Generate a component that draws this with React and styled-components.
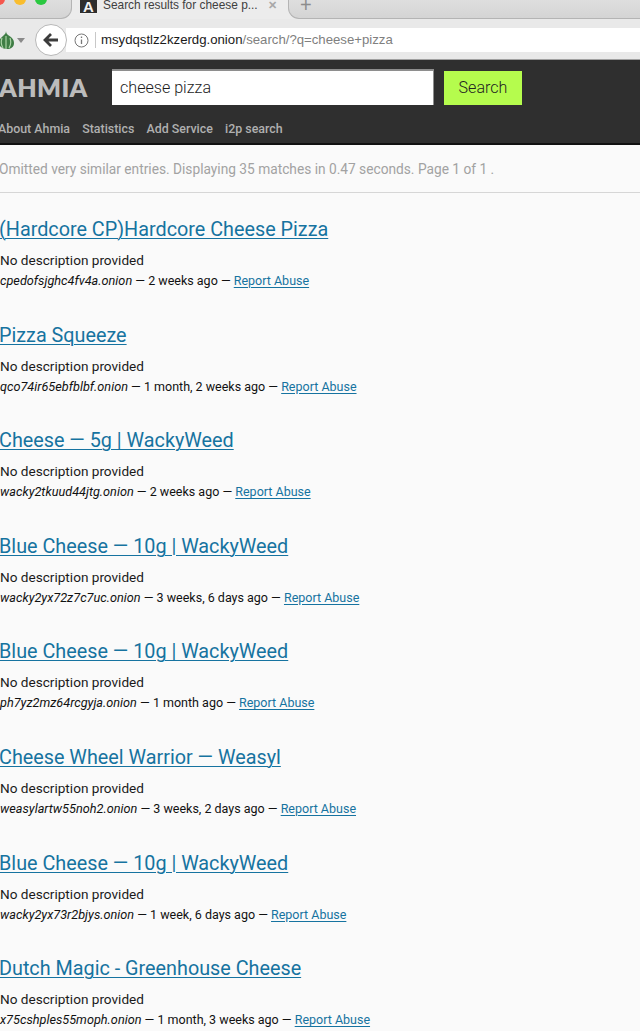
import React from "react";
import styled, { createGlobalStyle } from "styled-components";

const Global = createGlobalStyle`
  html, body { margin: 0; padding: 0; background: #fafafa; }
  body { width: 640px; height: 1031px; overflow: hidden; font-family: Roboto, "Liberation Sans", sans-serif; }
  * { box-sizing: border-box; }
`;
const Page = styled.div`width: 640px; height: 1031px; overflow: hidden; background: #fafafa;`;
const TabStrip = styled.div`height: 19px; display: flex; align-items: stretch; background: #ececec;`;
const Lights = styled.div`
  width: 72px; flex: none; display: flex; gap: 9px; overflow: hidden;
  background: linear-gradient(#dedede, #d4d4d4); border: solid #b4b4b4; border-width: 0 1px 1px 0;
  border-bottom-right-radius: 11px;
`;
const Light = styled.span`
  width: 12px; height: 12px; border-radius: 50%; background: ${p => p.$c}; flex: none; margin-top: -7px;
  &:first-child { margin-left: -7px; }
`;
const Tab = styled.div`
  width: 216px; flex: none; display: flex; align-items: flex-start; gap: 6px; padding-left: 8px;
  font: 11.9px/11px "Liberation Sans", Arial, sans-serif; color: #404040;
`;
const Favicon = styled.div`
  width: 17px; height: 14px; background: #2e2e2e; color: #f2f2f2; border-bottom: 1px solid #f2f2f2;
  font: bold 15px/14px "Liberation Sans", sans-serif; text-align: center; flex: none; overflow: hidden;
`;
const TabTitle = styled.span`flex: 1; white-space: nowrap;`;
const TabClose = styled.span`color: #a8a8a8; font: bold 11px/10px "Liberation Sans", sans-serif; margin-right: 11px;`;
const RestStrip = styled.div`
  flex: 1; background: linear-gradient(#dedede, #d4d4d4); border: solid #b4b4b4; border-width: 0 0 1px 1px;
  border-bottom-left-radius: 11px; padding-left: 11px; color: #8c8c8c; font: 300 20px/10px "Liberation Sans", sans-serif;
`;
const AddressBar = styled.div`
  height: 41px; padding-top: 2px; background: #e9e9e9; display: flex; align-items: center; border-bottom: 1px solid #a0a0a0;
`;
const AddonIcon = styled.div`width: 35px; display: flex; align-items: center; flex: none; gap: 3px; padding-right: 2px;`;
const BackButton = styled.div`
  width: 32px; height: 32px; border-radius: 50%; background: #fff; border: 1px solid #b8b8b8;
  display: flex; align-items: center; justify-content: center; flex: none; z-index: 1;
`;
const UrlField = styled.div`
  height: 24px; flex: 1; margin-left: -1px; background: #fff; display: flex; align-items: center;
  font: 13.2px/24px "Liberation Sans", Arial, sans-serif; color: #1a1a1a; white-space: nowrap; padding-left: 8px;
`;
const Divider = styled.span`width: 1px; height: 16px; background: #c8c8c8; margin: 0 5px 0 6px;`;
const UrlRest = styled.span`color: #808080;`;
const Header = styled.header`background: #2f2f2f; height: 85px; border-bottom: 2px solid #111;`;
const SearchRow = styled.div`display: flex; align-items: flex-start; padding-top: 9px; height: 52px;`;
const Logo = styled.div`
  width: 113px; flex: none; margin-left: -1px; padding-top: 5px;
  font: 800 25px/26px Lato, Roboto, sans-serif; color: #bcbcbc; letter-spacing: 0.4px;
`;
const SearchInput = styled.div`
  width: 322px; height: 36px; background: #fff; border: solid #8e8e8e; border-width: 2px 1px 0 0;
  padding-left: 8px; font: 300 16.1px/33px Roboto, sans-serif; color: #1c1c1c;
`;
const SearchButton = styled.div`
  width: 78px; height: 34px; margin: 2px 0 0 10px; background: #b5fc4d; color: #222;
  font: 300 16.1px/33px Roboto, sans-serif; text-align: center;
`;
const Nav = styled.nav`display: flex; gap: 12.2px; padding-top: 9px; font: 500 12.4px/15px Roboto, sans-serif; color: #b0b0b0; margin-left: -2px;`;
const Summary = styled.div`
  height: 48px; border-bottom: 1px solid #d6d6d6; padding: 16px 0 0 0; margin-left: -1px;
  font: 400 13.72px/16px Roboto, sans-serif; color: #a2a2a2; white-space: nowrap;
`;
const Results = styled.main`padding-top: 24px;`;
const Result = styled.article`height: 105.6px; white-space: nowrap;`;
const Title = styled.a`
  display: block; margin-left: -1px; font: 400 19.8px/26px Roboto, sans-serif; color: #1673a0; text-decoration: underline;
  text-underline-offset: 2px; text-decoration-thickness: 1px; width: fit-content;
`;
const Description = styled.div`font: 400 13.6px/16px Roboto, sans-serif; color: #1a1a1a; margin-top: 9px;`;
const Meta = styled.div`font: 400 12.5px/16px Roboto, sans-serif; color: #111; margin-top: 5px;`;
const Domain = styled.em`font-style: italic; font-size: 12.7px;`;
const Report = styled.a`color: #1673a0; text-decoration: underline; text-underline-offset: 2px;`;

const results = [
  ["(Hardcore CP)Hardcore Cheese Pizza", "cpedofsjghc4fv4a.onion", "2 weeks ago"],
  ["Pizza Squeeze", "qco74ir65ebfblbf.onion", "1 month, 2 weeks ago"],
  ["Cheese — 5g | WackyWeed", "wacky2tkuud44jtg.onion", "2 weeks ago"],
  ["Blue Cheese — 10g | WackyWeed", "wacky2yx72z7c7uc.onion", "3 weeks, 6 days ago"],
  ["Blue Cheese — 10g | WackyWeed", "ph7yz2mz64rcgyja.onion", "1 month ago"],
  ["Cheese Wheel Warrior — Weasyl", "weasylartw55noh2.onion", "3 weeks, 2 days ago"],
  ["Blue Cheese — 10g | WackyWeed", "wacky2yx73r2bjys.onion", "1 week, 6 days ago"],
  ["Dutch Magic - Greenhouse Cheese", "x75cshples55moph.onion", "1 month, 3 weeks ago"],
];

export default function App() {
  return (
    <Page>
      <Global />
      <TabStrip>
        <Lights><Light $c="#f5574e" /><Light $c="#f9bd2e" /><Light $c="#2ac840" /></Lights>
        <Tab>
          <Favicon>A</Favicon>
          <TabTitle>Search results for cheese p...</TabTitle>
          <TabClose>✕</TabClose>
        </Tab>
        <RestStrip>+</RestStrip>
      </TabStrip>
      <AddressBar>
        <AddonIcon>
          <svg width="14" height="18" viewBox="0 0 14 18">
            <path d="M6 0c0 2 1 3 2 4 3 2 6 4 6 8 0 4-3 6-7 6s-8-2-8-6c0-4 3-6 5-8 1-1 2-2 2-4z" fill="#3f7d45" />
            <path d="M2 7c-1 3-1 7 1 10M6 5v13M10 7c1 3 1 7-1 10" stroke="#a9d2a5" strokeWidth="1.2" fill="none" />
          </svg>
          <svg width="8" height="5" viewBox="0 0 8 5"><path d="M0 0h8L4 5z" fill="#8a8a8a" /></svg>
        </AddonIcon>
        <BackButton>
          <svg width="16" height="16" viewBox="0 0 16 16"><path d="M1.5 8H15M8 2 2 8l6 6" stroke="#3c3c3c" strokeWidth="2.8" fill="none" /></svg>
        </BackButton>
        <UrlField>
          <svg width="15" height="15" viewBox="0 0 15 15"><circle cx="7.5" cy="7.5" r="6.5" fill="none" stroke="#777" /><path d="M7.5 6.5v4.5M7.5 3.5v1.6" stroke="#777" strokeWidth="1.3" /></svg>
          <Divider />
          msydqstlz2kzerdg.onion<UrlRest>/search/?q=cheese+pizza</UrlRest>
        </UrlField>
      </AddressBar>
      <Header>
        <SearchRow>
          <Logo>AHMIA</Logo>
          <SearchInput>cheese pizza</SearchInput>
          <SearchButton>Search</SearchButton>
        </SearchRow>
        <Nav><span>About Ahmia</span><span>Statistics</span><span>Add Service</span><span>i2p search</span></Nav>
      </Header>
      <Summary>Omitted very similar entries. Displaying 35 matches in 0.47 seconds. Page 1 of 1 .</Summary>
      <Results>
        {results.map(([t, d, a], i) => (
          <Result key={i}>
            <Title>{t}</Title>
            <Description>No description provided</Description>
            <Meta><Domain>{d}</Domain> — {a} — <Report>Report Abuse</Report></Meta>
          </Result>
        ))}
      </Results>
    </Page>
  );
}
